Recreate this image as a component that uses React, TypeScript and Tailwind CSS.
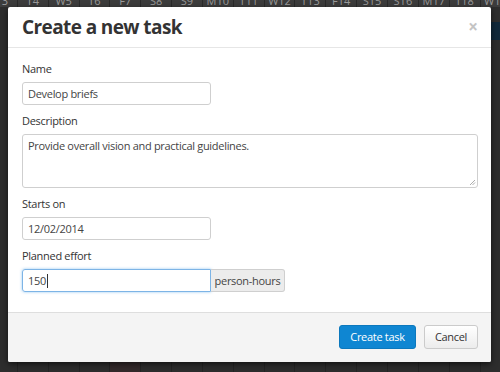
import React from "react";

const days = ["T3","T4","W5","T6","F7","S8","S9","M10","T11","W12","T13","F14","S15","S16","M17","T18","W19"];

export default function App() {
  const font = { fontFamily: '"Open Sans", "Liberation Sans", sans-serif' };
  return (
    <div className="relative w-[500px] h-[372px] overflow-hidden bg-[#2b2b2b]" style={font}>
      {/* background gantt */}
      <div className="flex flex-col h-full">
        <div className="flex h-[7px] ml-[-13px] bg-[#3c3c3c] overflow-hidden">
          {days.map((d) => (
            <div key={d} className="w-[30.85px] shrink-0 h-[7px] border-r border-[#2a2a2a] overflow-hidden flex justify-center">
              <div className="text-[11px] leading-[11px] mt-[-5px] text-[#9a9a9a]">{d}</div>
            </div>
          ))}
        </div>
        <div className="flex flex-1 ml-[-13px]">
          {days.map((d, i) => (
            <div key={d} className={`w-[30.85px] shrink-0 border-r border-[#242424] ${i === 4 ? "bg-[#33292a]" : "bg-[#2d2d2d]"}`} />
          ))}
        </div>
      </div>
      <div className="absolute left-[488px] top-[22px] w-[20px] h-[18px] bg-[#10283a]" />

      {/* modal */}
      <div className="absolute left-[8px] top-[7px] w-[483px] h-[355px] bg-white rounded-[2px] shadow-[0_2px_6px_rgba(0,0,0,0.6)] flex flex-col overflow-hidden">
        <div className="h-[41px] shrink-0 border-b border-[#e6e6e6] flex items-center justify-between pl-[14px] pr-[13px]">
          <h1 className="text-[19px] font-bold text-[#333] tracking-[-0.6px] leading-none">Create a new task</h1>
          <span className="text-[17px] font-bold text-[#c4c4c4] leading-none mb-[2px]">×</span>
        </div>
        <div className="flex-1 px-[14px] pt-[13px] flex flex-col text-[11px] text-[#333] leading-[15px] tracking-[-0.3px]">
          <label>Name</label>
          <div className="mt-[6px] w-[189px] h-[23px] border border-[#cfcfcf] rounded-[3px] px-[5px] flex items-center text-[#444]">Develop briefs</div>
          <label className="mt-[8px]">Description</label>
          <div className="relative mt-[6px] w-[456px] h-[54px] border border-[#cfcfcf] rounded-[3px] px-[5px] pt-[3px] text-[#444]">
            Provide overall vision and practical guidelines.
            <svg className="absolute right-[1px] bottom-[1px]" width="7" height="7" viewBox="0 0 7 7">
              <path d="M1 6 L6 1 M3.5 6 L6 3.5" stroke="#999" strokeWidth="0.8" />
            </svg>
          </div>
          <label className="mt-[8px]">Starts on</label>
          <div className="mt-[6px] w-[189px] h-[23px] border border-[#cfcfcf] rounded-[3px] px-[5px] flex items-center text-[#444]">12/02/2014</div>
          <label className="mt-[8px]">Planned effort</label>
          <div className="mt-[6px] flex h-[23px]">
            <div className="w-[189px] h-[23px] border border-[#7db4e6] rounded-l-[3px] px-[5px] flex items-center text-[#444] shadow-[0_0_3px_rgba(102,175,233,0.7)]">
              150<span className="inline-block w-px h-[14px] bg-[#333] ml-[1px]" />
            </div>
            <div className="w-[74px] h-[23px] border border-l-0 border-[#cfcfcf] rounded-r-[3px] bg-[#ececec] flex items-center justify-center text-[#444]">person-hours</div>
          </div>
        </div>
        <div className="h-[50px] shrink-0 border-t border-[#dedede] bg-[#f4f4f4] flex items-center justify-end gap-[8px] pr-[13px] pb-[1px] tracking-[-0.3px]">
          <button className="w-[77px] h-[24px] rounded-[3px] bg-[#0f86d2] border border-[#0c78bd] text-white text-[11px]">Create task</button>
          <button className="w-[54px] h-[24px] rounded-[3px] bg-gradient-to-b from-white to-[#ececec] border border-[#cbcbcb] text-[#333] text-[11px]">Cancel</button>
        </div>
      </div>
    </div>
  );
}
